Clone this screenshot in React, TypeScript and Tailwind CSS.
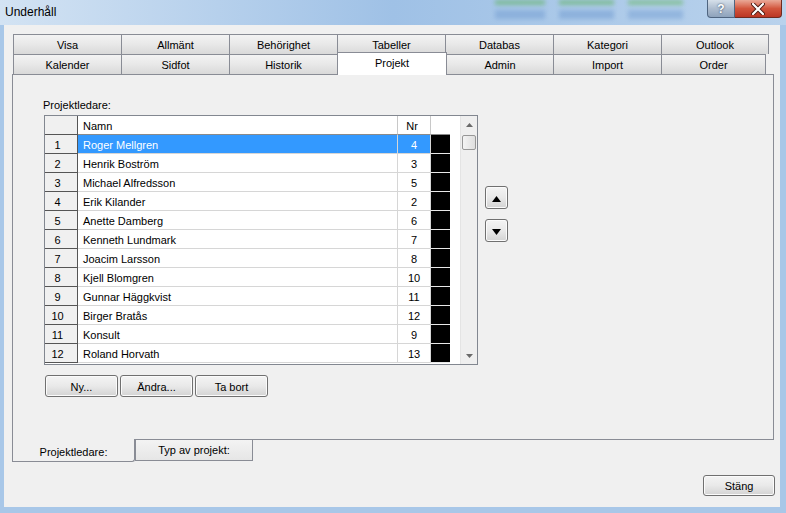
import React from 'react'

const people: [string, number][] = [
  ['Roger Mellgren', 4],
  ['Henrik Boström', 3],
  ['Michael Alfredsson', 5],
  ['Erik Kilander', 2],
  ['Anette Damberg', 6],
  ['Kenneth Lundmark', 7],
  ['Joacim Larsson', 8],
  ['Kjell Blomgren', 10],
  ['Gunnar Häggkvist', 11],
  ['Birger Bratås', 12],
  ['Konsult', 9],
  ['Roland Horvath', 13],
]

const tabLook =
  'flex items-center justify-center pt-[2px] h-[20px] border-t border-l border-[#898c95] bg-linear-to-b from-[#f3f3f3] via-[#e8e8e8] to-[#d9d9d9] text-[11px] leading-[13px]'

const btnLook =
  'flex items-center justify-center pt-[2px] border border-[#707070] rounded-[3px] bg-linear-to-b from-[#f4f4f4] via-[#e9e9e9] to-[#d3d3d3] text-[11px] leading-[13px] shadow-[inset_0_0_0_1px_#fbfbfb]'

function TitleBar() {
  return (
    <div className="relative h-[25px] flex items-start bg-linear-to-r from-[#d3e3f3] via-[#9fc1e6] to-[#b9d2ec] overflow-hidden">
      {/* blurred aero background bits */}
      <div className="absolute left-[495px] top-0 w-[200px] h-[22px] flex gap-[14px] blur-[2px] opacity-80">
        <div className="w-[50px] flex flex-col gap-[5px]">
          <div className="h-[5px] bg-[#74b886]" />
          <div className="h-[9px] bg-[#86acd9]" />
        </div>
        <div className="w-[55px] flex flex-col gap-[5px]">
          <div className="h-[5px] bg-[#74b886]" />
          <div className="h-[9px] bg-[#86acd9]" />
        </div>
        <div className="w-[55px] flex flex-col gap-[5px]">
          <div className="h-[5px] bg-[#7cbd8c]" />
          <div className="h-[9px] bg-[#8bb0db]" />
        </div>
      </div>
      <span className="relative mt-[5px] ml-[5px] text-[12px] leading-[15px] text-black">Underhåll</span>
      <div className="relative ml-auto mr-[4px] flex">
        <div className="w-[28px] h-[18px] flex items-center justify-center rounded-bl-[4px] border border-t-0 border-[#4f6580] bg-linear-to-b from-[#d6e0ea] via-[#aebdcf] to-[#8ea3bc] text-[12px] font-bold leading-[14px] text-white [text-shadow:0_0_2px_#1f3350]">
          ?
        </div>
        <div className="w-[47px] h-[18px] flex items-center justify-center rounded-br-[4px] border border-l-0 border-t-0 border-[#6e2a20] bg-linear-to-b from-[#e9a897] via-[#d2553d] to-[#bb3624]">
          <svg width="14" height="12" viewBox="0 0 14 12">
            <path d="M2 1 L12 11 M12 1 L2 11" stroke="#4a1a12" strokeWidth="4" strokeLinecap="round" />
            <path d="M2 1 L12 11 M12 1 L2 11" stroke="#ffffff" strokeWidth="2.2" strokeLinecap="round" />
          </svg>
        </div>
      </div>
    </div>
  )
}

function ScrollBar() {
  return (
    <div className="w-[17px] flex flex-col bg-[#efefef] border-l border-[#e4e4e4]">
      <div className="h-[18px] flex items-center justify-center">
        <svg width="7" height="4" viewBox="0 0 7 4">
          <polygon points="0,4 3.5,0 7,4" fill="#6a6a6a" />
        </svg>
      </div>
      <div className="mt-[1px] mx-[1px] h-[15px] rounded-[2px] border border-[#979797] bg-linear-to-r from-[#f4f4f4] to-[#dedede]" />
      <div className="flex-1" />
      <div className="h-[17px] flex items-center justify-center">
        <svg width="7" height="4" viewBox="0 0 7 4">
          <polygon points="0,0 3.5,4 7,0" fill="#6a6a6a" />
        </svg>
      </div>
    </div>
  )
}

function LeaderGrid() {
  return (
    <div className="w-[434px] h-[250px] border border-[#828790] bg-white flex overflow-hidden">
      <div className="w-[405px] flex flex-col">
        {/* header */}
        <div className="flex h-[19px] shrink-0 text-[11px] leading-[13px]">
          <div className="w-[33px] bg-[#f0f0f0] border-r border-b border-[#555555]" />
          <div className="w-[320px] border-r border-b border-r-[#c8c8c8] border-b-[#8a8a8a] flex items-center pt-[2px] pl-[5px]">
            Namn
          </div>
          <div className="w-[33px] border-r border-b border-r-[#c8c8c8] border-b-[#8a8a8a] flex items-center justify-center pt-[2px] pr-[4px]">
            Nr
          </div>
          <div className="w-[19px] border-b border-[#8a8a8a]" />
        </div>
        {people.map(([name, nr], i) => {
          const sel = i === 0
          return (
            <div key={name} className="flex h-[19px] shrink-0 text-[11px] leading-[13px]">
              <div className="w-[33px] bg-[#f0f0f0] border-r border-b border-[#555555] flex items-center justify-center pt-[2px] pr-[7px]">
                {i + 1}
              </div>
              <div
                className={
                  sel
                    ? 'w-[320px] bg-[#3399ff] text-white border-r border-b border-[#d6d6d6] flex items-center pt-[2px] pl-[5px]'
                    : 'w-[320px] border-r border-b border-[#d6d6d6] flex items-center pt-[2px] pl-[5px]'
                }
              >
                {name}
              </div>
              <div
                className={
                  sel
                    ? 'w-[33px] bg-[#3399ff] text-white border-r border-b border-[#d6d6d6] flex items-center justify-center pt-[2px]'
                    : 'w-[33px] border-r border-b border-[#d6d6d6] flex items-center justify-center pt-[2px]'
                }
              >
                {nr}
              </div>
              <div className="w-[19px] bg-black border-b border-[#e8e8e8]" />
            </div>
          )
        })}
      </div>
      <div className="w-[10px]" />
      <ScrollBar />
    </div>
  )
}

function Arrow({ up }: { up?: boolean }) {
  return (
    <div className={`${btnLook} w-[23px] h-[23px] pt-0`}>
      <svg width="9" height="6" viewBox="0 0 9 6">
        {up ? <polygon points="0,6 4.5,0 9,6" fill="#000" /> : <polygon points="0,0 4.5,6 9,0" fill="#000" />}
      </svg>
    </div>
  )
}

export default function App() {
  return (
    <div className="w-[786px] h-[513px] bg-[#a8c7e8] flex flex-col overflow-hidden font-['Liberation_Sans',Arial,sans-serif] text-black">
      <TitleBar />

      <div className="ml-[4px] w-[776px] h-[482px] bg-[#f0f0f0] flex flex-col">
        {/* tab control */}
        <div className="ml-[8px] mt-[9px] w-[762px] flex flex-col">
          <div className="flex pl-[1px]">
            <div className={`${tabLook} w-[108px]`}>Visa</div>
            <div className={`${tabLook} w-[108px]`}>Allmänt</div>
            <div className={`${tabLook} w-[108px]`}>Behörighet</div>
            <div className={`${tabLook} w-[108px]`}>Tabeller</div>
            <div className={`${tabLook} w-[108px]`}>Databas</div>
            <div className={`${tabLook} w-[108px]`}>Kategori</div>
            <div className={`${tabLook} w-[108px] border-r`}>Outlook</div>
          </div>
          <div className="relative z-10 flex pl-[1px] h-[20px]">
            <div className={`${tabLook} w-[108px]`}>Kalender</div>
            <div className={`${tabLook} w-[108px]`}>Sidfot</div>
            <div className={`${tabLook} w-[108px]`}>Historik</div>
            <div className="w-[110px] h-[23px] -mt-[2px] bg-white border-t border-l border-r border-[#898c95] flex justify-center pt-[4px] text-[11px] leading-[13px]">
              Projekt
            </div>
            <div className={`${tabLook} w-[106px] border-l-0`}>Admin</div>
            <div className={`${tabLook} w-[108px]`}>Import</div>
            <div className={`${tabLook} w-[105px] border-r`}>Order</div>
          </div>

          {/* panel */}
          <div className="h-[365px] border-l border-t border-r border-[#898c95] bg-[#f0f0f0] flex flex-col pl-[30px]">
            <div className="pt-[24px] text-[11px] leading-[13px]">Projektledare:</div>
            <div className="mt-[3px] ml-[1px] flex items-start">
              <LeaderGrid />
              <div className="ml-[7px] mt-[71px] flex flex-col gap-[10px]">
                <Arrow up />
                <Arrow />
              </div>
            </div>
            <div className="mt-[10px] ml-[2px] flex gap-[2px]">
              <div className={`${btnLook} w-[73px] h-[22px]`}>Ny...</div>
              <div className={`${btnLook} w-[73px] h-[22px]`}>Ändra...</div>
              <div className={`${btnLook} w-[73px] h-[22px]`}>Ta bort</div>
            </div>
          </div>

          {/* bottom tabs */}
          <div className="flex h-[23px]">
            <div className="w-[123px] h-[23px] border-l border-b border-r border-[#898c95] rounded-br-[3px] bg-[#f0f0f0] flex items-center justify-center pt-[4px] text-[11px] leading-[13px]">
              Projektledare:
            </div>
            <div className="flex-1 border-t border-[#898c95] flex">
              <div className="w-[118px] h-[21px] border-l border-r border-b border-[#898c95] bg-linear-to-b from-[#f3f3f3] to-[#e6e6e6] flex items-center justify-center pt-[1px] text-[11px] leading-[13px]">
                Typ av projekt:
              </div>
            </div>
          </div>
        </div>

        <div className="mt-[13px] pr-[5px] flex justify-end">
          <div className={`${btnLook} w-[72px] h-[21px]`}>Stäng</div>
        </div>
      </div>
    </div>
  )
}
